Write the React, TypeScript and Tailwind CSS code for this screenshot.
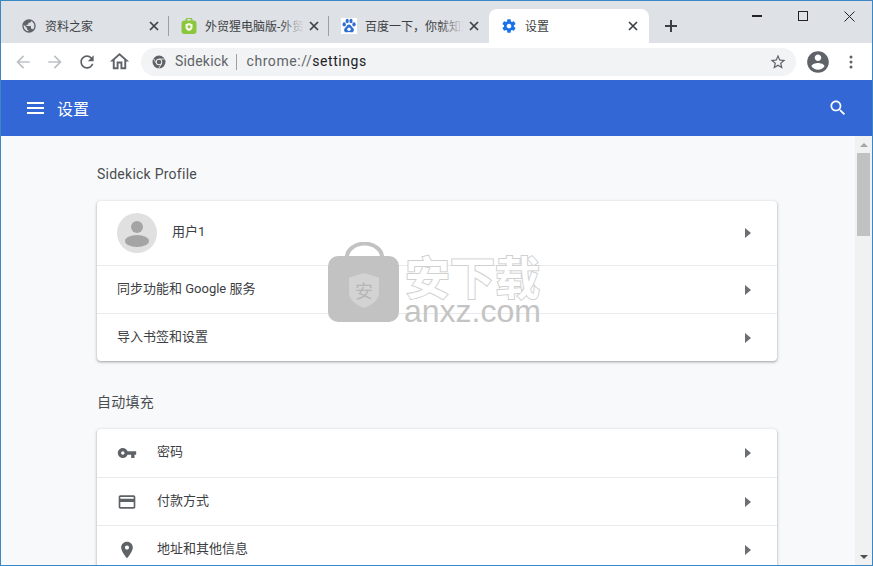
import type { ReactNode } from 'react';

const cjk = "font-['Roboto','Noto_Sans_CJK_SC',sans-serif]";

function Close() {
  return (
    <svg width="10" height="10" viewBox="0 0 10 10" className="shrink-0">
      <path d="M1 1l8 8M9 1l-8 8" stroke="#3c4043" strokeWidth="1.7" />
    </svg>
  );
}

function Globe() {
  return (
    <svg width="16" height="16" viewBox="0 0 24 24" fill="#5f6368">
      <path d="M12 2C6.48 2 2 6.48 2 12s4.48 10 10 10 10-4.48 10-10S17.52 2 12 2zm-1 17.93c-3.95-.49-7-3.85-7-7.93 0-.62.08-1.21.21-1.79L9 15v1c0 1.1.9 2 2 2v1.93zm6.9-2.54c-.26-.81-1-1.39-1.9-1.39h-1v-3c0-.55-.45-1-1-1H8v-2h2c.55 0 1-.45 1-1V7h2c1.1 0 2-.9 2-2v-.41c2.93 1.19 5 4.06 5 7.41 0 2.08-.8 3.97-2.1 5.39z" />
    </svg>
  );
}

function BagIcon() {
  return (
    <svg width="16" height="16" viewBox="0 0 16 16">
      <path d="M5 4V3a3 3 0 0 1 6 0v1" fill="none" stroke="#8cc63f" strokeWidth="1.4" />
      <rect x="0.5" y="2.5" width="15" height="13.5" rx="3" fill="#8cc63f" />
      <path d="M8 5l3.500 1.200v3c0 2-1.700 3.100-3.500 3.800-1.800-.7-3.500-1.800-3.500-3.800v-3z" fill="#f4f9e4" />
      <circle cx="8" cy="8.800" r="1.500" fill="#8cc63f" />
    </svg>
  );
}

function BaiduIcon() {
  return (
    <svg width="16" height="16" viewBox="0 0 16 16" fill="#2f6fd0">
      <rect width="16" height="16" fill="#fff" />
      <ellipse cx="3.2" cy="6.4" rx="1.7" ry="2.1" />
      <ellipse cx="6.2" cy="3" rx="1.6" ry="2.2" />
      <ellipse cx="10" cy="3" rx="1.6" ry="2.2" />
      <ellipse cx="13" cy="6.4" rx="1.7" ry="2.1" />
      <path d="M8 6.5c-2 0-2.3 2.2-4 3.4-1.6 1.2-1 4.4 1.4 4.4 1 0 1.700-.4 2.600-.4s1.600.4 2.600.4c2.400 0 3-3.200 1.400-4.400-1.700-1.200-2-3.400-4-3.400z" />
      <circle cx="8" cy="11.300" r="1.700" fill="#fff" />
    </svg>
  );
}

function Gear({ size = 16, color = '#1a73e8' }: { size?: number; color?: string }) {
  return (
    <svg width={size} height={size} viewBox="0 0 24 24" fill={color}>
      <path d="M19.43 12.98c.04-.32.07-.64.07-.98s-.03-.66-.07-.98l2.11-1.65c.19-.15.24-.42.12-.64l-2-3.46c-.12-.22-.39-.3-.61-.22l-2.49 1c-.52-.4-1.080-.73-1.690-.98l-.38-2.650C14.460 2.180 14.250 2 14 2h-4c-.25 0-.46.18-.49.42l-.38 2.650c-.61.25-1.170.59-1.690.98l-2.490-1c-.23-.09-.49 0-.61.22l-2 3.460c-.13.220-.07.490.12.640l2.110 1.650c-.04.320-.07.650-.07.980s.03.660.07.980l-2.110 1.650c-.19.150-.24.420-.12.640l2 3.460c.12.220.39.300.61.220l2.490-1c.52.400 1.080.730 1.690.980l.38 2.650c.03.240.24.420.49.420h4c.25 0 .46-.18.49-.42l.38-2.650c.61-.25 1.170-.59 1.690-.98l2.490 1c.23.090.49 0 .61-.22l2-3.460c.12-.22.07-.49-.12-.64l-2.110-1.650zM12 15.500c-1.930 0-3.500-1.570-3.500-3.500s1.570-3.500 3.500-3.500 3.500 1.570 3.500 3.500-1.570 3.500-3.500 3.500z" />
    </svg>
  );
}

const tabs = [
  { title: '资料之家', icon: <Globe /> },
  { title: '外贸猩电脑版-外贸猩', icon: <BagIcon /> },
  { title: '百度一下，你就知道', icon: <BaiduIcon /> },
];

function TabStrip() {
  return (
    <div className="flex h-[42px] shrink-0 items-end bg-[#dee1e6] pl-2">
      {tabs.map((t, i) => (
        <div key={t.title} className="flex h-[34px] w-40 items-center pl-3">
          <span className="flex w-4 shrink-0 justify-center">{t.icon}</span>
          <span className="relative ml-2 mt-[2px] w-[99px] overflow-hidden whitespace-nowrap text-[12px] text-[#3c4043]">
            {t.title}
            <span className="absolute inset-y-0 right-0 w-6 bg-gradient-to-r from-transparent to-[#dee1e6]" />
          </span>
          <span className="ml-auto">
            <Close />
          </span>
          <span className={`ml-[9px] h-5 w-px shrink-0 ${i < 2 ? 'bg-[#9aa0a6]' : 'bg-transparent'}`} />
        </div>
      ))}
      <div className="flex h-[34px] w-40 items-center rounded-t-lg bg-white pl-3 pr-[11px]">
        <Gear />
        <span className="ml-2 mt-[2px] text-[12px] text-[#3c4043]">设置</span>
        <span className="ml-auto">
          <Close />
        </span>
      </div>
      <div className="ml-[15px] flex h-[34px] items-center">
        <svg width="14" height="14" viewBox="0 0 14 14">
          <path d="M7 1v12M1 7h12" stroke="#3c4043" strokeWidth="2" />
        </svg>
      </div>
      <div className="ml-auto flex h-full items-start">
        <div className="flex h-[30px] w-[46px] items-center justify-center">
          <span className="h-[1.5px] w-[10px] bg-[#222]" />
        </div>
        <div className="flex h-[30px] w-[46px] items-center justify-center">
          <span className="h-[10px] w-[10px] border border-[#222]" />
        </div>
        <div className="flex h-[30px] w-[46px] items-center justify-center">
          <svg width="11" height="11" viewBox="0 0 11 11">
            <path d="M.5.5l10 10M10.500.5l-10 10" stroke="#222" strokeWidth="1" />
          </svg>
        </div>
      </div>
    </div>
  );
}

function NavIcon({ d, color, size = 20 }: { d: string; color: string; size?: number }) {
  return (
    <span className="flex w-8 justify-center">
      <svg width={size} height={size} viewBox="0 0 24 24" fill={color}>
        <path d={d} />
      </svg>
    </span>
  );
}

function Toolbar() {
  return (
    <div className="flex h-[37px] shrink-0 items-center bg-white pl-[6px] pr-[5px]">
      <NavIcon color="#bdc1c6" d="M20 11H7.830l5.590-5.590L12 4l-8 8 8 8 1.410-1.410L7.830 13H20v-2z" />
      <NavIcon color="#bdc1c6" d="M12 4l-1.410 1.410L16.170 11H4v2h12.170l-5.580 5.590L12 20l8-8z" />
      <NavIcon color="#5f6368" d="M17.650 6.350C16.200 4.900 14.210 4 12 4c-4.420 0-7.990 3.580-7.990 8s3.570 8 7.990 8c3.730 0 6.840-2.550 7.730-6h-2.080c-.82 2.330-3.040 4-5.650 4-3.310 0-6-2.690-6-6s2.690-6 6-6c1.660 0 3.140.69 4.220 1.780L13 11h7V4l-2.350 2.350z" />
      <NavIcon color="#5f6368" size={23} d="M12 5.690l5 4.500V18h-2v-6H9v6H7v-7.810l5-4.500M12 3L2 12h3v8h6v-6h2v6h6v-8h3L12 3z" />
      <div className="ml-[6px] flex h-7 w-[655px] items-center rounded-full bg-[#f1f3f4] pl-[11px] pr-[9px]">
        <svg width="14" height="14" viewBox="0 0 14 14" className="shrink-0">
          <circle cx="7" cy="7" r="6.500" fill="#5f6368" />
          <path d="M7 4h6M4.400 8.500L1.400 3.300M9.600 8.500L6.600 13.700" stroke="#f1f3f4" strokeWidth="0.8" />
          <circle cx="7" cy="7" r="3.200" fill="#f1f3f4" />
          <circle cx="7" cy="7" r="2.300" fill="#5f6368" />
        </svg>
        <span className="ml-[9px] font-['Roboto',sans-serif] text-[14px] tracking-[0.2px] text-[#5f6368]">Sidekick</span>
        <span className="ml-[7px] h-4 w-px bg-[#9aa0a6]" />
        <span className="ml-[10px] font-['Roboto',sans-serif] text-[14px] tracking-[0.55px] text-[#5f6368]">
          chrome://<span className="text-[#202124]">settings</span>
        </span>
        <svg width="18" height="18" viewBox="0 0 24 24" fill="#5f6368" className="ml-auto">
          <path d="M22 9.240l-7.190-.62L12 2 9.190 8.630 2 9.240l5.460 4.730L5.820 21 12 17.270 18.180 21l-1.630-7.030L22 9.240zM12 15.400l-3.760 2.270 1-4.280-3.320-2.880 4.380-.38L12 6.100l1.710 4.040 4.380.38-3.320 2.880 1 4.280L12 15.400z" />
        </svg>
      </div>
      <svg width="26" height="26" viewBox="0 0 24 24" fill="#5f6368" className="ml-[9px]">
        <path d="M12 2C6.480 2 2 6.480 2 12s4.480 10 10 10 10-4.480 10-10S17.520 2 12 2zm0 3c1.660 0 3 1.340 3 3s-1.340 3-3 3-3-1.340-3-3 1.340-3 3-3zm0 14.200c-2.500 0-4.710-1.280-6-3.220.03-1.990 4-3.080 6-3.080 1.990 0 5.970 1.090 6 3.080-1.290 1.940-3.500 3.220-6 3.220z" />
      </svg>
      <svg width="4" height="14" viewBox="0 0 4 14" fill="#5f6368" className="ml-[18px]">
        <circle cx="2" cy="2" r="1.500" />
        <circle cx="2" cy="7" r="1.500" />
        <circle cx="2" cy="12" r="1.500" />
      </svg>
    </div>
  );
}

function Header() {
  return (
    <div className={`flex h-14 shrink-0 items-center bg-[#3367d6] pl-[26px] pr-[24px] text-white ${cjk}`}>
      <svg width="17" height="12" viewBox="0 0 17 12" fill="#fff">
        <path d="M0 0h17v2H0zM0 5h17v2H0zM0 10h17v2H0z" />
      </svg>
      <span className="ml-[13px] mt-[3px] text-[16px]">设置</span>
      <svg width="20" height="20" viewBox="0 0 24 24" fill="#fff" className="mb-[1px] ml-auto">
        <path d="M15.500 14h-.79l-.28-.27C15.410 12.590 16 11.110 16 9.500 16 5.910 13.090 3 9.500 3S3 5.910 3 9.500 5.910 16 9.500 16c1.610 0 3.090-.59 4.230-1.570l.27.28v.79l5 4.990L20.490 19l-4.990-5zm-6 0C7.010 14 5 11.990 5 9.500S7.010 5 9.500 5 14 7.010 14 9.500 11.990 14 9.500 14z" />
      </svg>
    </div>
  );
}

function Row({ icon, label, border = true }: { icon?: ReactNode; label: string; border?: boolean }) {
  return (
    <div className={`flex h-12 items-center pl-5 pr-[26px] ${border ? 'border-t border-[#e8eaed]' : ''}`}>
      {icon}
      <span className="pb-[2px] text-[13px] text-[#3c4043]">{label}</span>
      <svg width="6" height="10" viewBox="0 0 6 10" fill="#6b6e72" className="ml-auto">
        <path d="M0 0l6 5-6 5z" />
      </svg>
    </div>
  );
}

function RowIcon({ d }: { d: string }) {
  return (
    <span className="mr-5 flex w-5 justify-center">
      <svg width="20" height="20" viewBox="0 0 24 24" fill="#5f6368">
        <path d={d} />
      </svg>
    </span>
  );
}

function Card({ children }: { children: ReactNode }) {
  return <div className="w-[680px] rounded bg-white shadow-[0_1px_2px_rgba(60,64,67,0.3),0_1px_3px_1px_rgba(60,64,67,0.15)]">{children}</div>;
}

function SectionTitle({ children }: { children: ReactNode }) {
  return <div className="pb-[17px] pt-[1px] text-[14px] leading-[19px] tracking-[0.25px] text-[#4a4d50]">{children}</div>;
}

function Watermark() {
  return (
    <div className={`pointer-events-none absolute left-[327px] top-[241px] flex items-start ${cjk}`}>
      <svg width="71" height="80" viewBox="0 0 71 80">
        <path d="M19 15a17 13 0 0 1 35 0" fill="none" stroke="#c2c2c2" strokeWidth="4" />
        <rect x="0" y="14" width="71" height="66" rx="10" fill="#c2c2c2" />
        <path d="M36 31l15 4.500v15c0 8-7 12-15 15.500-8-3.500-15-7.500-15-15.500v-15z" fill="#d3d3d3" />
        <text x="36" y="56" textAnchor="middle" fontSize="18" fill="#b6b6b6">安</text>
      </svg>
      <div className="ml-[5px] flex flex-col items-center pt-[18px]">
        <span className="text-[45px] font-bold leading-[40px] text-white [-webkit-text-stroke:2px_#d0d0d0] [paint-order:stroke_fill]">安下载</span>
        <span className="font-['Liberation_Sans',sans-serif] text-[32px] leading-[22px] text-[#c4c4c4]">anxz.com</span>
      </div>
    </div>
  );
}

function Scrollbar() {
  return (
    <div className="flex w-[17px] shrink-0 flex-col items-center bg-[#f1f1f1]">
      <div className="flex h-[17px] items-center justify-center">
        <span className="h-0 w-0 border-x-[4px] border-b-[4px] border-x-transparent border-b-[#a3a3a3]" />
      </div>
      <div className="h-[83px] w-[13px] bg-[#c1c1c1]" />
      <div className="mt-auto flex h-[17px] items-center justify-center">
        <span className="h-0 w-0 border-x-[4px] border-t-[4px] border-x-transparent border-t-[#505050]" />
      </div>
    </div>
  );
}

export default function App() {
  return (
    <div className={`relative flex h-[566px] w-[873px] flex-col overflow-hidden border border-[#3b87c4] ${cjk}`}>
      <TabStrip />
      <Toolbar />
      <Header />
      <div className="flex min-h-0 flex-1 bg-[#f8f9fa]">
        <div className="min-h-0 flex-1 overflow-hidden pl-[96px] pt-[28px]">
          <SectionTitle>Sidekick Profile</SectionTitle>
          <Card>
            <div className="flex h-16 items-center pl-5 pr-[26px]">
              <svg width="40" height="40" viewBox="0 0 40 40">
                <circle cx="20" cy="20" r="20" fill="#e0e0e0" />
                <circle cx="20" cy="14" r="6" fill="#a4a4a4" />
                <ellipse cx="20" cy="28" rx="12" ry="6" fill="#a4a4a4" />
              </svg>
              <span className="ml-[15px] pb-[2px] text-[13px] text-[#3c4043]">用户1</span>
              <svg width="6" height="10" viewBox="0 0 6 10" fill="#6b6e72" className="ml-auto">
                <path d="M0 0l6 5-6 5z" />
              </svg>
            </div>
            <Row label="同步功能和 Google 服务" />
            <Row label="导入书签和设置" />
          </Card>
          <div className="h-[31px]" />
          <SectionTitle>自动填充</SectionTitle>
          <Card>
            <Row
              border={false}
              label="密码"
              icon={<RowIcon d="M12.650 10C11.830 7.670 9.610 6 7 6c-3.310 0-6 2.690-6 6s2.690 6 6 6c2.610 0 4.830-1.670 5.650-4H17v4h4v-4h2v-4H12.650zM7 14c-1.100 0-2-.9-2-2s.9-2 2-2 2 .9 2 2-.9 2-2 2z" />}
            />
            <Row
              label="付款方式"
              icon={<RowIcon d="M20 4H4c-1.110 0-1.990.89-1.990 2L2 18c0 1.110.89 2 2 2h16c1.110 0 2-.89 2-2V6c0-1.110-.89-2-2-2zm0 14H4v-6h16v6zm0-10H4V6h16v2z" />}
            />
            <Row
              label="地址和其他信息"
              icon={<RowIcon d="M12 2C8.130 2 5 5.130 5 9c0 5.250 7 13 7 13s7-7.750 7-13c0-3.870-3.130-7-7-7zm0 9.500c-1.380 0-2.500-1.120-2.500-2.500s1.120-2.500 2.500-2.500 2.500 1.120 2.500 2.500-1.120 2.500-2.500 2.500z" />}
            />
          </Card>
        </div>
        <Scrollbar />
      </div>
      <Watermark />
    </div>
  );
}
